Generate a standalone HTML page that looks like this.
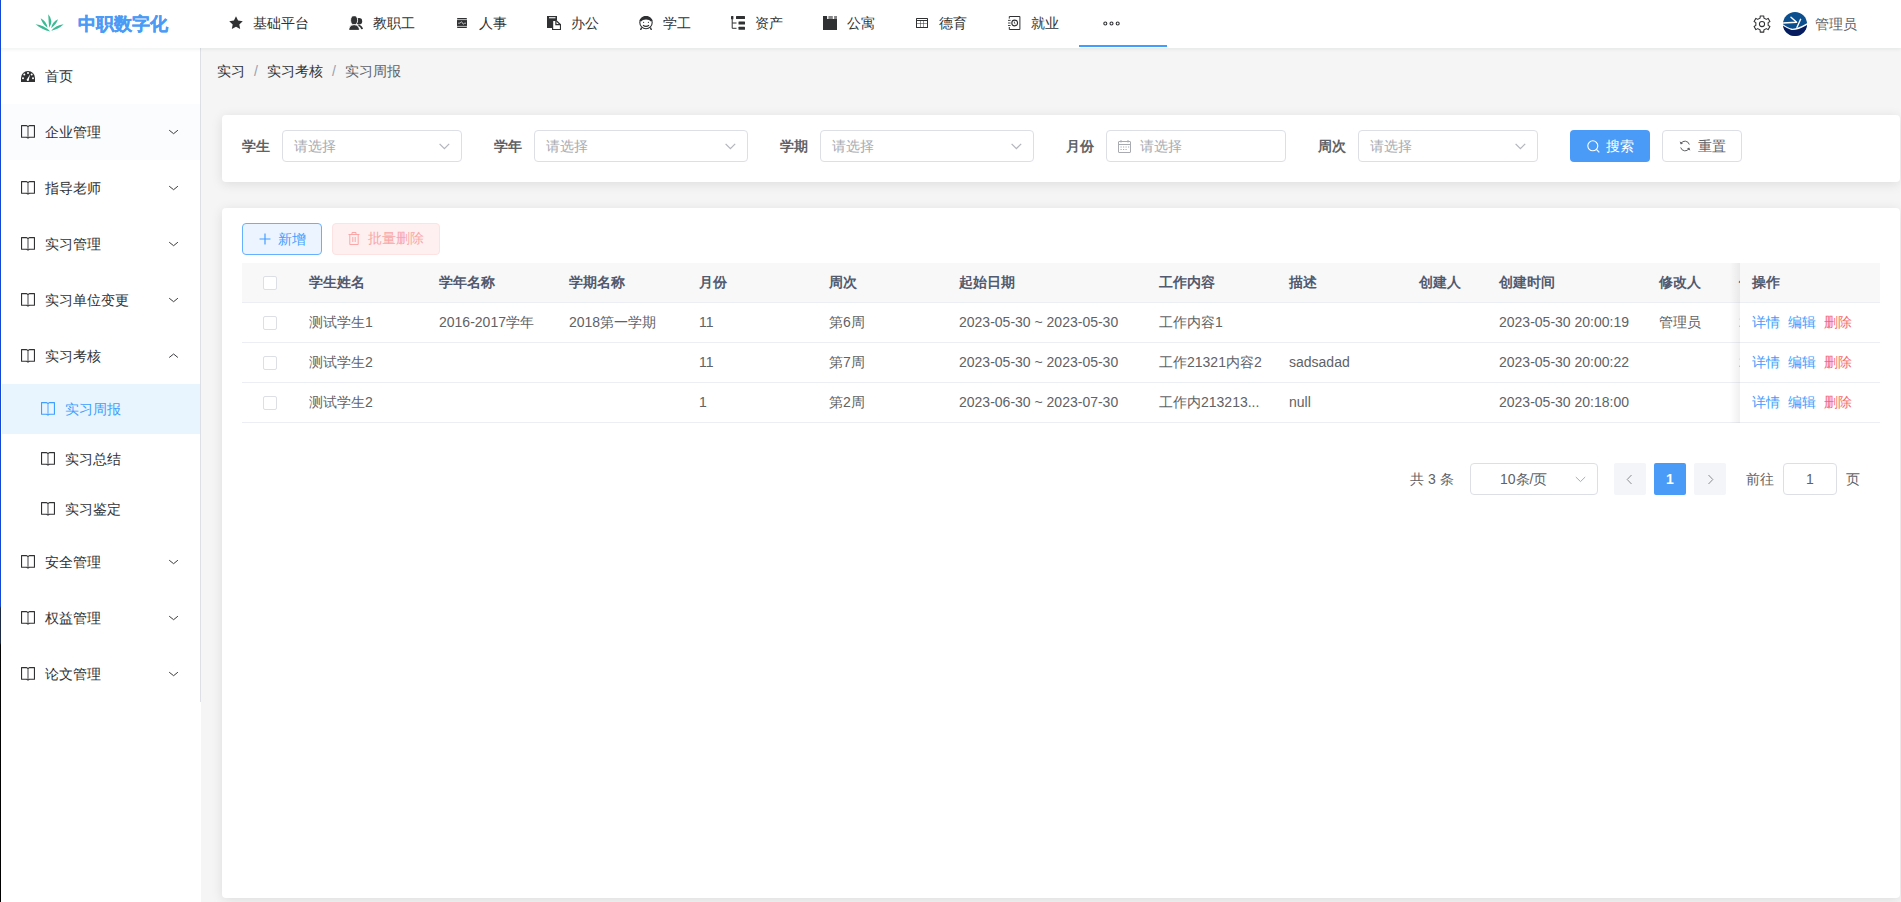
<!DOCTYPE html>
<html><head><meta charset="utf-8">
<style>
*{box-sizing:border-box;margin:0;padding:0}
html,body{width:1901px;height:902px;overflow:hidden}
body{font-family:"Liberation Sans",sans-serif;font-size:14px;color:#606266;background:#f5f5f5;position:relative}
.abs{position:absolute}
#edge{position:absolute;left:0;top:0;width:1px;height:902px;background:linear-gradient(#1448d4 0,#1448d4 606px,#1d2a44 608px,#1d2a44 643px,#050505 645px,#000 902px);z-index:50}
#header{position:absolute;left:0;top:0;width:1901px;height:48px;background:#fff;box-shadow:0 1px 4px rgba(0,21,41,.08);z-index:10}
.nav{position:absolute;top:0;height:48px;line-height:46px;color:#303133;font-size:14px;white-space:nowrap}
.nav svg{position:absolute;top:16px}
#sidebar{position:absolute;left:0;top:48px;width:201px;height:654px;background:#fff;border-right:1px solid #dcdfe6}
.mi{position:absolute;left:0;width:200px;height:56px;line-height:56px;color:#303133;white-space:nowrap}
.mi .t{position:absolute;left:45px;top:0}
.mi svg.ic{position:absolute;left:21px;top:21px}
.mi svg.ar{position:absolute;left:168px;top:24px}
.sub{position:absolute;left:0;width:200px;height:50px;line-height:50px;color:#303133;white-space:nowrap}
.sub .t{position:absolute;left:65px;top:0}
.sub svg.ic{position:absolute;left:41px;top:18px}
.card{position:absolute;background:#fff;border-radius:4px;box-shadow:0 2px 12px 0 rgba(0,0,0,.1)}
.lbl{position:absolute;top:136px;line-height:20px;font-weight:bold;color:#606266;white-space:nowrap}
.inp{position:absolute;top:130px;height:32px;border:1px solid #dcdfe6;border-radius:4px;background:#fff}
.ph{position:absolute;top:0;line-height:30px;color:#a8abb2;white-space:nowrap}
.th{position:absolute;top:272px;line-height:20px;font-weight:bold;color:#515a6e;white-space:nowrap}
.td{position:absolute;line-height:20px;color:#606266;white-space:nowrap}
.cb{position:absolute;left:263px;width:14px;height:14px;border:1px solid #dcdfe6;border-radius:2px;background:#fff}
</style></head><body>
<div id="edge"></div>
<div id="header">
 <svg class="abs" style="left:35px;top:14px" width="29" height="18" viewBox="200 170 880 560">
  <g fill="#3dba94">
   <path d="M205 490 Q406 661 665 715 Q477 517 205 490Z"/>
   <path d="M365 305 Q420 489 578 600 Q547 398 365 305Z"/>
   <path d="M600 180 Q610 390 630 600 Q780 378 600 180Z"/>
   <path d="M905 335 Q726 418 688 612 Q844 511 905 335Z"/>
   <path d="M1082 488 Q842 507 688 692 Q914 646 1082 488Z"/>
  </g>
 </svg>
 <div class="abs" style="left:78px;top:12px;line-height:24px;font-size:18px;font-weight:bold;color:#4a9bf5;-webkit-text-stroke:.25px #4a9bf5;white-space:nowrap">中职数字化</div>
 <div class="nav" style="left:229px">
  <svg style="left:0" width="14" height="14" viewBox="0 0 14 14"><path fill="#303133" d="M7 .3l2.05 4.3 4.7.6-3.45 3.25.88 4.67L7 10.85l-4.18 2.27.88-4.67L.25 5.2l4.7-.6z"/></svg>
  <span style="position:absolute;left:24px">基础平台</span></div>
 <div class="nav" style="left:349px">
  <svg style="left:0" width="14" height="14" viewBox="0 0 14 14"><g fill="#303133"><circle cx="10" cy="5.3" r="3.2"/><path d="M9.6 8.4Q13.4 9.6 14 13L12.3 13.2Q11.6 10.8 9.2 9.7Z"/></g><g fill="#303133" stroke="#fff" stroke-width=".9"><ellipse cx="5.1" cy="4.2" rx="3.5" ry="4.5"/><path d="M-.3 14.4Q-.3 9.1 5.1 8.6Q10.5 9.1 10.5 14.4Z"/></g></svg>
  <span style="position:absolute;left:24px">教职工</span></div>
 <div class="nav" style="left:457px">
  <svg style="left:0;top:18px" width="10" height="10" viewBox="0 0 10 10"><rect width="10" height="10" rx=".8" fill="#303133"/><g stroke="#fff" stroke-width=".7" fill="none"><path d="M0 1.6h10M0 8.4h10"/><path d="M1.2 5.2l1.8-.1 1.5-1.4 1.8 2.5 1.4-1h1.3"/></g></svg>
  <span style="position:absolute;left:22px">人事</span></div>
 <div class="nav" style="left:547px">
  <svg style="left:0" width="14" height="14" viewBox="0 0 14 14"><path fill="#303133" d="M0 0h10v4H6v8H0z"/><rect x="2" y="1.2" width="6.5" height="1.1" fill="#fff"/><path d="M5.6 4.4h3.3l4.6 4.3V13.6H5.6z" fill="#fff" stroke="#303133" stroke-width="1.2"/><path d="M8.9 4.4v4.3h4.6" fill="none" stroke="#303133" stroke-width="1.2"/></svg>
  <span style="position:absolute;left:24px">办公</span></div>
 <div class="nav" style="left:639px">
  <svg style="left:0" width="14" height="14" viewBox="0 0 14 14"><g fill="none" stroke="#303133" stroke-width="1.1"><circle cx="7" cy="6.6" r="6.2"/><path d="M1.2 4.8C2.5 3 4.5 2.4 7 2.4s4.5.6 5.8 2.4" stroke-width="2"/><path d="M4 9.2c1.6 1.2 4.4 1.2 6 0"/><path d="M2.6 11.6L1.6 14M11.4 11.6l1 2.4" stroke-width="1.4"/></g><path d="M1 4.6C1.8 1.6 4 .5 7 .5s5.2 1.1 6 4.1C11.6 3.3 9.8 2.8 7 2.8S2.4 3.3 1 4.6z" fill="#303133"/><circle cx="4.6" cy="6.3" r=".6" fill="#303133"/><circle cx="9.4" cy="6.3" r=".6" fill="#303133"/></svg>
  <span style="position:absolute;left:24px">学工</span></div>
 <div class="nav" style="left:731px">
  <svg style="left:0" width="14" height="14" viewBox="0 0 14 14"><g fill="#303133"><rect x="0" y="0" width="2.4" height="3.2" rx=".5"/><rect x="5" y="0" width="9" height="3" rx=".5"/><rect x="7.5" y="5.6" width="6.5" height="3" rx=".5"/><rect x="7.5" y="10.8" width="6.5" height="3" rx=".5"/></g><path d="M1.2 3v9.3h4.3M1.2 7h4.3" fill="none" stroke="#303133" stroke-width="1"/></svg>
  <span style="position:absolute;left:24px">资产</span></div>
 <div class="nav" style="left:823px">
  <svg style="left:0" width="14" height="14" viewBox="0 0 14 14"><path fill="#303133" d="M0 0h4.1v3H14v11H0z"/><path fill="#303133" opacity=".6" d="M5.4 0h4.4v3H5.4zM11.1 0H14v3h-2.9z"/></svg>
  <span style="position:absolute;left:24px">公寓</span></div>
 <div class="nav" style="left:916px">
  <svg style="left:0;top:18px" width="12" height="10" viewBox="0 0 12 10"><rect width="12" height="10" rx=".6" fill="#303133"/><g fill="#fff"><rect x="1" y="1" width="10" height="1"/><rect x="1" y="3" width="3" height="2.5"/><rect x="4.5" y="3" width="3" height="2.5"/><rect x="8" y="3" width="3" height="2.5"/><rect x="1" y="6" width="3" height="3"/><rect x="4.5" y="6" width="3" height="3"/><rect x="8" y="6" width="3" height="3"/></g></svg>
  <span style="position:absolute;left:23px">德育</span></div>
 <div class="nav" style="left:1008px">
  <svg style="left:0" width="13" height="14" viewBox="0 0 13 14"><g fill="none" stroke="#303133" stroke-width="1"><path d="M1.3 2.6V.5h10.6v13H1.3V11"/><circle cx="6.7" cy="7" r="2.9" stroke-width="1.1"/><path d="M6.4 5.6v1.6l1 .7" stroke-width=".8"/><path d="M0 4.4h2.6M0 7h2.6M0 9.5h2.6" stroke-width=".9"/></g></svg>
  <span style="position:absolute;left:23px">就业</span></div>
 <svg class="abs" style="left:1103px;top:21px" width="17" height="5" viewBox="0 0 17 5"><g fill="none" stroke="#303133" stroke-width="1.1"><circle cx="2.3" cy="2.5" r="1.5"/><circle cx="8.5" cy="2.5" r="1.5"/><circle cx="14.7" cy="2.5" r="1.5"/></g></svg>
 <div class="abs" style="left:1079px;top:45px;width:88px;height:2px;background:#409eff"></div>
 <svg class="abs" style="left:1753px;top:15px" width="18" height="18" viewBox="0 0 18 18"><path fill="none" stroke="#303133" stroke-width="1.05" stroke-linejoin="round" d="M7.19 0.90 L10.81 0.90 L10.86 2.98 L13.28 4.38 L15.11 3.38 L16.92 6.52 L15.14 7.60 L15.14 10.40 L16.92 11.48 L15.11 14.62 L13.28 13.62 L10.86 15.02 L10.81 17.10 L7.19 17.10 L7.14 15.02 L4.72 13.62 L2.89 14.62 L1.08 11.48 L2.86 10.40 L2.86 7.60 L1.08 6.52 L2.89 3.38 L4.72 4.38 L7.14 2.98Z"/><circle cx="9" cy="9" r="2.6" fill="none" stroke="#303133" stroke-width="1.05"/></svg>
 <svg class="abs" style="left:1783px;top:12px" width="24" height="24" viewBox="0 0 24 24"><defs><clipPath id="cc"><circle cx="12" cy="12" r="12"/></clipPath></defs><g clip-path="url(#cc)"><rect width="24" height="24" fill="#0b4f8f"/><path d="M-1 12.3 Q5 16.5 8.7 17.3 Q14 18 25 11.5 V25 H-1z" fill="#061c5e"/><g fill="none" stroke="#fff" stroke-width="1.4" stroke-linecap="round"><path d="M-1 12.3 Q5 16.5 8.7 17.3 Q14 18 25 11.5"/><path d="M-1 11.1 L13.6 10.2 M8 5.3 L13.4 10 M17.6 7.3 L14 15.3"/></g></g></svg>
 <div class="abs" style="left:1815px;top:14px;line-height:20px;color:#606266;white-space:nowrap">管理员</div>
</div>
<div id="sidebar">
<div class="mi" style="top:0"><svg class="ic" style="top:23px" width="14" height="11" viewBox="0 0 14 11"><path d="M7 0A7 7 0 0 0 0 7v4h14V7A7 7 0 0 0 7 0z" fill="#303133"/><g fill="#fff"><circle cx="7" cy="2" r="1"/><circle cx="3.3" cy="3.6" r="1"/><circle cx="10.7" cy="3.6" r="1"/><circle cx="2" cy="7.2" r="1"/><circle cx="12" cy="7.2" r="1"/><path d="M9.2 3.3L7.9 8.2a1.2 1.2 0 1 1-1.6-.5z"/></g></svg><span class="t">首页</span></div>
<div class="mi" style="top:56px;background:#fbfcfe"><svg class="ic" width="14" height="14" viewBox="0 0 14 14"><g fill="none" stroke="#303133" stroke-width="1.1" stroke-linejoin="round"><path d="M.55 .6H5.6L7 1.5 8.4 .6H13.45V12.2H8.4L7 13.1 5.6 12.2H.55z"/><path d="M7 1.4v11.7" stroke-width="1.5" stroke-opacity=".6"/></g></svg><span class="t">企业管理</span><svg class="ar" width="11" height="7" viewBox="0 0 11 7"><path d="M1.2 2.2l4.4 3.5 4.3-3.5" fill="none" stroke="#3a3b3f" stroke-width="1"/></svg></div>
<div class="mi" style="top:112px"><svg class="ic" width="14" height="14" viewBox="0 0 14 14"><g fill="none" stroke="#303133" stroke-width="1.1" stroke-linejoin="round"><path d="M.55 .6H5.6L7 1.5 8.4 .6H13.45V12.2H8.4L7 13.1 5.6 12.2H.55z"/><path d="M7 1.4v11.7" stroke-width="1.5" stroke-opacity=".6"/></g></svg><span class="t">指导老师</span><svg class="ar" width="11" height="7" viewBox="0 0 11 7"><path d="M1.2 2.2l4.4 3.5 4.3-3.5" fill="none" stroke="#3a3b3f" stroke-width="1"/></svg></div>
<div class="mi" style="top:168px"><svg class="ic" width="14" height="14" viewBox="0 0 14 14"><g fill="none" stroke="#303133" stroke-width="1.1" stroke-linejoin="round"><path d="M.55 .6H5.6L7 1.5 8.4 .6H13.45V12.2H8.4L7 13.1 5.6 12.2H.55z"/><path d="M7 1.4v11.7" stroke-width="1.5" stroke-opacity=".6"/></g></svg><span class="t">实习管理</span><svg class="ar" width="11" height="7" viewBox="0 0 11 7"><path d="M1.2 2.2l4.4 3.5 4.3-3.5" fill="none" stroke="#3a3b3f" stroke-width="1"/></svg></div>
<div class="mi" style="top:224px"><svg class="ic" width="14" height="14" viewBox="0 0 14 14"><g fill="none" stroke="#303133" stroke-width="1.1" stroke-linejoin="round"><path d="M.55 .6H5.6L7 1.5 8.4 .6H13.45V12.2H8.4L7 13.1 5.6 12.2H.55z"/><path d="M7 1.4v11.7" stroke-width="1.5" stroke-opacity=".6"/></g></svg><span class="t">实习单位变更</span><svg class="ar" width="11" height="7" viewBox="0 0 11 7"><path d="M1.2 2.2l4.4 3.5 4.3-3.5" fill="none" stroke="#3a3b3f" stroke-width="1"/></svg></div>
<div class="mi" style="top:280px"><svg class="ic" width="14" height="14" viewBox="0 0 14 14"><g fill="none" stroke="#303133" stroke-width="1.1" stroke-linejoin="round"><path d="M.55 .6H5.6L7 1.5 8.4 .6H13.45V12.2H8.4L7 13.1 5.6 12.2H.55z"/><path d="M7 1.4v11.7" stroke-width="1.5" stroke-opacity=".6"/></g></svg><span class="t">实习考核</span><svg class="ar" width="11" height="7" viewBox="0 0 11 7"><path d="M1.2 5.5l4.4-3.5 4.3 3.5" fill="none" stroke="#3a3b3f" stroke-width="1"/></svg></div>
<div class="sub" style="top:336px;background:linear-gradient(90deg,#fff 2px,#e8f4fe 2px);color:#409eff"><svg class="ic" width="14" height="14" viewBox="0 0 14 14"><g fill="none" stroke="#409eff" stroke-width="1.1" stroke-linejoin="round"><path d="M.55 .6H5.6L7 1.5 8.4 .6H13.45V12.2H8.4L7 13.1 5.6 12.2H.55z"/><path d="M7 1.4v11.7" stroke-width="1.5" stroke-opacity=".6"/></g></svg><span class="t">实习周报</span></div>
<div class="sub" style="top:386px"><svg class="ic" width="14" height="14" viewBox="0 0 14 14"><g fill="none" stroke="#303133" stroke-width="1.1" stroke-linejoin="round"><path d="M.55 .6H5.6L7 1.5 8.4 .6H13.45V12.2H8.4L7 13.1 5.6 12.2H.55z"/><path d="M7 1.4v11.7" stroke-width="1.5" stroke-opacity=".6"/></g></svg><span class="t">实习总结</span></div>
<div class="sub" style="top:436px"><svg class="ic" width="14" height="14" viewBox="0 0 14 14"><g fill="none" stroke="#303133" stroke-width="1.1" stroke-linejoin="round"><path d="M.55 .6H5.6L7 1.5 8.4 .6H13.45V12.2H8.4L7 13.1 5.6 12.2H.55z"/><path d="M7 1.4v11.7" stroke-width="1.5" stroke-opacity=".6"/></g></svg><span class="t">实习鉴定</span></div>
<div class="mi" style="top:486px"><svg class="ic" width="14" height="14" viewBox="0 0 14 14"><g fill="none" stroke="#303133" stroke-width="1.1" stroke-linejoin="round"><path d="M.55 .6H5.6L7 1.5 8.4 .6H13.45V12.2H8.4L7 13.1 5.6 12.2H.55z"/><path d="M7 1.4v11.7" stroke-width="1.5" stroke-opacity=".6"/></g></svg><span class="t">安全管理</span><svg class="ar" width="11" height="7" viewBox="0 0 11 7"><path d="M1.2 2.2l4.4 3.5 4.3-3.5" fill="none" stroke="#3a3b3f" stroke-width="1"/></svg></div>
<div class="mi" style="top:542px"><svg class="ic" width="14" height="14" viewBox="0 0 14 14"><g fill="none" stroke="#303133" stroke-width="1.1" stroke-linejoin="round"><path d="M.55 .6H5.6L7 1.5 8.4 .6H13.45V12.2H8.4L7 13.1 5.6 12.2H.55z"/><path d="M7 1.4v11.7" stroke-width="1.5" stroke-opacity=".6"/></g></svg><span class="t">权益管理</span><svg class="ar" width="11" height="7" viewBox="0 0 11 7"><path d="M1.2 2.2l4.4 3.5 4.3-3.5" fill="none" stroke="#3a3b3f" stroke-width="1"/></svg></div>
<div class="mi" style="top:598px"><svg class="ic" width="14" height="14" viewBox="0 0 14 14"><g fill="none" stroke="#303133" stroke-width="1.1" stroke-linejoin="round"><path d="M.55 .6H5.6L7 1.5 8.4 .6H13.45V12.2H8.4L7 13.1 5.6 12.2H.55z"/><path d="M7 1.4v11.7" stroke-width="1.5" stroke-opacity=".6"/></g></svg><span class="t">论文管理</span><svg class="ar" width="11" height="7" viewBox="0 0 11 7"><path d="M1.2 2.2l4.4 3.5 4.3-3.5" fill="none" stroke="#3a3b3f" stroke-width="1"/></svg></div>
</div>
<div class="abs" style="left:0;top:702px;width:201px;height:200px;background:#fff"></div>
<div class="abs" style="left:217px;top:61px;line-height:20px;white-space:nowrap">
 <span style="color:#303133">实习</span><span style="color:#97a0ad;margin:0 9px">/</span><span style="color:#303133">实习考核</span><span style="color:#97a0ad;margin:0 9px">/</span><span style="color:#606266">实习周报</span>
</div>
<div class="card" style="left:222px;top:115px;width:1678px;height:67px"></div>
<div class="lbl" style="left:242px">学生</div><div class="inp" style="left:282px;width:180px"><span class="ph" style="left:11px">请选择</span><svg class="abs" style="left:156px;top:12px" width="11" height="7" viewBox="0 0 11 7"><path d="M.6 .9l4.8 4.7L10.2 .9" fill="none" stroke="#b3b6bd" stroke-width="1.3"/></svg></div>
<div class="lbl" style="left:494px">学年</div><div class="inp" style="left:534px;width:214px"><span class="ph" style="left:11px">请选择</span><svg class="abs" style="left:190px;top:12px" width="11" height="7" viewBox="0 0 11 7"><path d="M.6 .9l4.8 4.7L10.2 .9" fill="none" stroke="#b3b6bd" stroke-width="1.3"/></svg></div>
<div class="lbl" style="left:780px">学期</div><div class="inp" style="left:820px;width:214px"><span class="ph" style="left:11px">请选择</span><svg class="abs" style="left:190px;top:12px" width="11" height="7" viewBox="0 0 11 7"><path d="M.6 .9l4.8 4.7L10.2 .9" fill="none" stroke="#b3b6bd" stroke-width="1.3"/></svg></div>
<div class="lbl" style="left:1066px">月份</div><div class="inp" style="left:1106px;width:180px"><svg class="abs" style="left:11px;top:9px" width="13" height="13" viewBox="0 0 13 13"><g fill="none" stroke="#a8abb2" stroke-width="1"><rect x=".5" y="1.5" width="12" height="11" rx=".5"/><path d="M.5 4.5h12"/><path d="M3 0v2.5M10 0v2.5"/></g><g fill="#a8abb2"><rect x="2.5" y="6.5" width="1.2" height="1"/><rect x="5" y="6.5" width="1.2" height="1"/><rect x="7.5" y="6.5" width="1.2" height="1"/><rect x="10" y="6.5" width="1.2" height="1"/><rect x="2.5" y="9" width="1.2" height="1"/><rect x="5" y="9" width="1.2" height="1"/><rect x="7.5" y="9" width="1.2" height="1"/></g></svg><span class="ph" style="left:33px">请选择</span></div>
<div class="lbl" style="left:1318px">周次</div><div class="inp" style="left:1358px;width:180px"><span class="ph" style="left:11px">请选择</span><svg class="abs" style="left:156px;top:12px" width="11" height="7" viewBox="0 0 11 7"><path d="M.6 .9l4.8 4.7L10.2 .9" fill="none" stroke="#b3b6bd" stroke-width="1.3"/></svg></div>
<div class="abs" style="left:1570px;top:130px;width:80px;height:32px;background:#4a9bf8;border-radius:4px;color:#fff;line-height:32px;white-space:nowrap"><svg class="abs" style="left:17px;top:10px" width="13" height="13" viewBox="0 0 13 13"><g fill="none" stroke="#fff" stroke-width="1.1"><circle cx="5.8" cy="5.8" r="5"/><path d="M9.5 9.5l2.8 2.8"/></g></svg><span class="abs" style="left:36px;top:0">搜索</span></div>
<div class="abs" style="left:1662px;top:130px;width:80px;height:32px;background:#fff;border:1px solid #dcdfe6;border-radius:4px;color:#606266;line-height:30px;white-space:nowrap"><svg class="abs" style="left:16px;top:9px" width="12" height="12" viewBox="0 0 12 12"><g fill="none" stroke="#606266" stroke-width="1"><path d="M10.3 4.5A4.6 4.6 0 0 0 1.8 3.6"/><path d="M1.7 7.5a4.6 4.6 0 0 0 8.5.9"/></g><path d="M0.6 1.6l1.3 2.9 2.4-1.6zM11.4 10.4l-1.3-2.9-2.4 1.6z" fill="#606266"/></svg><span class="abs" style="left:35px;top:0">重置</span></div>
<div class="card" style="left:222px;top:208px;width:1678px;height:690px"></div>
<div class="abs" style="left:242px;top:223px;width:80px;height:32px;background:#ecf5ff;border:1px solid #66b1ff;border-radius:4px;color:#409eff;line-height:30px;white-space:nowrap"><svg class="abs" style="left:16px;top:9px" width="12" height="12" viewBox="0 0 12 12"><path d="M6 .5v11M.5 6h11" stroke="#409eff" stroke-width="1.2" fill="none"/></svg><span class="abs" style="left:35px;top:0">新增</span></div>
<div class="abs" style="left:332px;top:223px;width:108px;height:32px;background:#fef0f0;border:1px solid #fde2e2;border-radius:4px;color:#f9a7a7;line-height:30px;white-space:nowrap"><svg class="abs" style="left:15px;top:8px" width="12" height="13" viewBox="0 0 12 13"><g fill="none" stroke="#f9a7a7" stroke-width="1"><path d="M.5 2.5h11M4 2.5V.5h4v2M1.8 2.5v10h8.4v-10M4.8 5v5M7.2 5v5"/></g></svg><span class="abs" style="left:35px;top:-1px">批量删除</span></div>
<div class="abs" style="left:242px;top:263px;width:1638px;height:40px;background:#f8f8f9;border-bottom:1px solid #ebeef5"></div>
<div class="cb" style="top:276px"></div>
<div class="th" style="left:309px">学生姓名</div>
<div class="th" style="left:439px">学年名称</div>
<div class="th" style="left:569px">学期名称</div>
<div class="th" style="left:699px">月份</div>
<div class="th" style="left:829px">周次</div>
<div class="th" style="left:959px">起始日期</div>
<div class="th" style="left:1159px">工作内容</div>
<div class="th" style="left:1289px">描述</div>
<div class="th" style="left:1419px">创建人</div>
<div class="th" style="left:1499px">创建时间</div>
<div class="th" style="left:1659px">修改人</div>
<div class="th" style="left:1739px">修改时间</div>
<div class="abs" style="left:242px;top:303px;width:1638px;height:40px;border-bottom:1px solid #ebeef5"></div>
<div class="cb" style="top:316px"></div>
<div class="td" style="left:309px;top:312px">测试学生1</div>
<div class="td" style="left:439px;top:312px">2016-2017学年</div>
<div class="td" style="left:569px;top:312px">2018第一学期</div>
<div class="td" style="left:699px;top:312px">11</div>
<div class="td" style="left:829px;top:312px">第6周</div>
<div class="td" style="left:959px;top:312px">2023-05-30 ~ 2023-05-30</div>
<div class="td" style="left:1159px;top:312px">工作内容1</div>
<div class="td" style="left:1499px;top:312px">2023-05-30 20:00:19</div>
<div class="td" style="left:1659px;top:312px">管理员</div>
<div class="td" style="left:1739px;top:312px">2023</div>
<div class="abs" style="left:242px;top:343px;width:1638px;height:40px;border-bottom:1px solid #ebeef5"></div>
<div class="cb" style="top:356px"></div>
<div class="td" style="left:309px;top:352px">测试学生2</div>
<div class="td" style="left:699px;top:352px">11</div>
<div class="td" style="left:829px;top:352px">第7周</div>
<div class="td" style="left:959px;top:352px">2023-05-30 ~ 2023-05-30</div>
<div class="td" style="left:1159px;top:352px">工作21321内容2</div>
<div class="td" style="left:1289px;top:352px">sadsadad</div>
<div class="td" style="left:1499px;top:352px">2023-05-30 20:00:22</div>
<div class="td" style="left:1739px;top:352px">2023</div>
<div class="abs" style="left:242px;top:383px;width:1638px;height:40px;border-bottom:1px solid #ebeef5"></div>
<div class="cb" style="top:396px"></div>
<div class="td" style="left:309px;top:392px">测试学生2</div>
<div class="td" style="left:699px;top:392px">1</div>
<div class="td" style="left:829px;top:392px">第2周</div>
<div class="td" style="left:959px;top:392px">2023-06-30 ~ 2023-07-30</div>
<div class="td" style="left:1159px;top:392px">工作内213213...</div>
<div class="td" style="left:1289px;top:392px">null</div>
<div class="td" style="left:1499px;top:392px">2023-05-30 20:18:00</div>
<div class="abs" style="left:1730px;top:263px;width:10px;height:160px;background:linear-gradient(90deg,rgba(0,0,0,0),rgba(0,0,0,.06))"></div>
<div class="abs" style="left:1740px;top:263px;width:140px;height:40px;background:#f8f8f9;border-bottom:1px solid #ebeef5"></div>
<div class="th" style="left:1752px">操作</div>
<div class="abs" style="left:1740px;top:303px;width:140px;height:40px;background:#fff;border-bottom:1px solid #ebeef5"></div>
<div class="td" style="left:1752px;top:312px;color:#409eff">详情</div><div class="td" style="left:1788px;top:312px;color:#409eff">编辑</div><div class="td" style="left:1824px;top:312px;color:#f56c6c">删除</div>
<div class="abs" style="left:1740px;top:343px;width:140px;height:40px;background:#fff;border-bottom:1px solid #ebeef5"></div>
<div class="td" style="left:1752px;top:352px;color:#409eff">详情</div><div class="td" style="left:1788px;top:352px;color:#409eff">编辑</div><div class="td" style="left:1824px;top:352px;color:#f56c6c">删除</div>
<div class="abs" style="left:1740px;top:383px;width:140px;height:40px;background:#fff;border-bottom:1px solid #ebeef5"></div>
<div class="td" style="left:1752px;top:392px;color:#409eff">详情</div><div class="td" style="left:1788px;top:392px;color:#409eff">编辑</div><div class="td" style="left:1824px;top:392px;color:#f56c6c">删除</div>
<div class="td" style="left:1410px;top:469px">共 3 条</div>
<div class="abs" style="left:1470px;top:463px;width:128px;height:32px;border:1px solid #dcdfe6;border-radius:4px"><span class="abs" style="left:29px;top:0;line-height:30px;color:#606266;white-space:nowrap">10条/页</span><svg class="abs" style="left:104px;top:12px" width="11" height="7" viewBox="0 0 11 7"><path d="M.8 1l4.7 4.6L10.2 1" fill="none" stroke="#a8abb2" stroke-width="1"/></svg></div>
<div class="abs" style="left:1614px;top:463px;width:32px;height:32px;background:#f4f5f8;border-radius:2px"><svg class="abs" style="left:12px;top:11px" width="7" height="11" viewBox="0 0 7 11"><path d="M5.5 1L1.2 5.5l4.3 4.5" fill="none" stroke="#8a8d94" stroke-width="1"/></svg></div>
<div class="abs" style="left:1654px;top:463px;width:32px;height:32px;background:#4a9bf8;border-radius:2px;color:#fff;font-weight:bold;text-align:center;line-height:32px">1</div>
<div class="abs" style="left:1694px;top:463px;width:32px;height:32px;background:#f4f5f8;border-radius:2px"><svg class="abs" style="left:13px;top:11px" width="7" height="11" viewBox="0 0 7 11"><path d="M1.5 1l4.3 4.5L1.5 10" fill="none" stroke="#8a8d94" stroke-width="1"/></svg></div>
<div class="td" style="left:1746px;top:469px">前往</div>
<div class="abs" style="left:1783px;top:463px;width:54px;height:32px;border:1px solid #dcdfe6;border-radius:4px;text-align:center;line-height:30px;color:#606266">1</div>
<div class="td" style="left:1846px;top:469px">页</div>
</body></html>
